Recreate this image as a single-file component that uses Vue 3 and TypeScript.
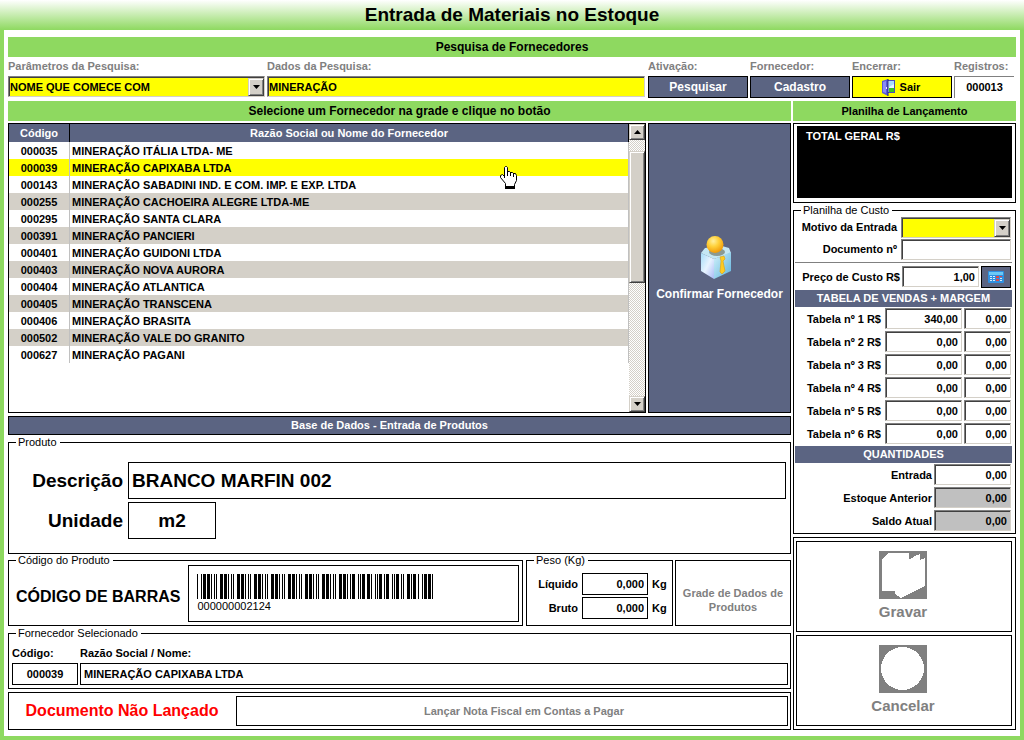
<script setup lang="ts">
import { computed, ref } from 'vue'

interface Supplier {
  code: string
  name: string
}

const suppliers: Supplier[] = [
  { code: '000035', name: 'MINERAÇÃO ITÁLIA LTDA- ME' },
  { code: '000039', name: 'MINERAÇÃO CAPIXABA LTDA' },
  { code: '000143', name: 'MINERAÇÃO SABADINI IND. E COM. IMP. E EXP. LTDA' },
  { code: '000255', name: 'MINERAÇÃO CACHOEIRA ALEGRE LTDA-ME' },
  { code: '000295', name: 'MINERAÇÃO SANTA CLARA' },
  { code: '000391', name: 'MINERAÇÃO PANCIERI' },
  { code: '000401', name: 'MINERAÇÃO GUIDONI LTDA' },
  { code: '000403', name: 'MINERAÇÃO NOVA AURORA' },
  { code: '000404', name: 'MINERAÇÃO ATLANTICA' },
  { code: '000405', name: 'MINERAÇÃO TRANSCENA' },
  { code: '000406', name: 'MINERAÇÃO BRASITA' },
  { code: '000502', name: 'MINERAÇÃO VALE DO GRANITO' },
  { code: '000627', name: 'MINERAÇÃO PAGANI' },
]

const selected = ref<Supplier>(suppliers[1])
const searchText = ref('MINERAÇÃO')
const count = computed(() => String(suppliers.length).padStart(6, '0'))

const prices = ref([
  { value: '340,00', margin: '0,00' },
  { value: '0,00', margin: '0,00' },
  { value: '0,00', margin: '0,00' },
  { value: '0,00', margin: '0,00' },
  { value: '0,00', margin: '0,00' },
  { value: '0,00', margin: '0,00' },
])

const quantities = [
  { id: 'entrada', label: 'Entrada', locked: false },
  { id: 'anterior', label: 'Estoque Anterior', locked: true },
  { id: 'saldo', label: 'Saldo Atual', locked: true },
]

// Code 39: nine elements per character, bars and spaces alternating.
const code39: Record<string, string> = {
  '0': 'nnnwwnwnn',
  '1': 'wnnwnnnnw',
  '2': 'nnwwnnnnw',
  '4': 'nnnwwnnnw',
  '*': 'nwnnwnwnn',
}
const barcode = '000000002124'
const bars = computed(() => {
  const out: { x: number; w: number }[] = []
  let x = 0
  for (const ch of `*${barcode}*`) {
    code39[ch].split('').forEach((e, i) => {
      const w = e === 'w' ? 3 : 1
      if (i % 2 === 0) out.push({ x, w })
      x += w
    })
    x += 2
  }
  return out
})
</script>

<template>
  <div class="window">
    <header class="title"><h1>Entrada de Materiais no Estoque</h1></header>
    <main class="body">
      <h2 class="green wide">Pesquisa de Fornecedores</h2>

      <form class="search" @submit.prevent>
        <div class="cell">
          <label for="param">Parâmetros da Pesquisa:</label>
          <div class="combo">
            <select id="param" class="sunken yellow"><option>NOME QUE COMECE COM</option></select>
            <span class="drop"><svg width="7" height="4" viewBox="0 0 7 4"><path d="M0 0H7L3.500 4Z" /></svg></span>
          </div>
        </div>
        <div class="cell data">
          <label for="dados">Dados da Pesquisa:</label>
          <input id="dados" v-model="searchText" class="sunken yellow" type="text" />
        </div>
        <div class="cell">
          <span class="caption">Ativação:</span>
          <button class="blue" type="submit">Pesquisar</button>
        </div>
        <div class="cell">
          <span class="caption">Fornecedor:</span>
          <button class="blue" type="button">Cadastro</button>
        </div>
        <div class="cell">
          <span class="caption">Encerrar:</span>
          <button class="exit" type="button">
            <svg width="14" height="17" viewBox="0 0 14 17">
              <rect x="5.500" y="1.500" width="7" height="12" fill="#e6f6ff" stroke="#4a4ab8" />
              <path d="M7 9H12V13H7Z" fill="#38c322" />
              <path d="M7 2H12V5L7 8Z" fill="#a8dcfa" />
              <path d="M0 2L6 0V17L0 14Z" fill="#5a5ad6" />
              <path d="M1 3L4 2V14L1 13Z" fill="#8c8cf4" />
              <path d="M6 0V17" stroke="#20207c" />
              <rect x="4" y="8" width="1" height="2" fill="#f3e9ff" />
            </svg>
            Sair
          </button>
        </div>
        <div class="cell">
          <label for="registros">Registros:</label>
          <output id="registros" class="records">{{ count }}</output>
        </div>
      </form>

      <div class="columns">
        <section class="left">
          <h2 class="green wide">Selecione um Fornecedor na grade e clique no botão</h2>
          <div class="pick">
            <div class="grid">
              <div class="rows">
                <table>
                  <thead>
                    <tr><th class="code">Código</th><th>Razão Social ou Nome do Fornecedor</th></tr>
                  </thead>
                  <tbody>
                    <tr
                      v-for="s in suppliers"
                      :key="s.code"
                      :class="{ current: s.code === selected.code }"
                      @click="selected = s"
                    >
                      <td class="code">{{ s.code }}</td>
                      <td>{{ s.name }}</td>
                    </tr>
                  </tbody>
                </table>
                <svg class="pointer" width="18" height="24" viewBox="0 0 18 24">
                  <path
                    d="M4.500 1.500L5.500 .5H6.500L7.500 1.500V5.500H9.500L10.500 6.500H12.500L13.500 7.500H15.500L16.500 9.500V14.500L14.500 18.500V20.500H5.500V17.500L.5 11.500V9.500L2.500 8.500L4.500 10.500Z"
                    fill="#fff" stroke="#000"
                  />
                  <path d="M7.500 5V10M10.500 6V10M13.500 7V11M4.500 10V12" stroke="#000" fill="none" />
                  <rect x="5" y="20" width="10" height="3" />
                </svg>
              </div>
              <div class="scroll">
                <button class="raised" type="button" aria-label="Subir"><svg width="7" height="4" viewBox="0 0 7 4"><path d="M0 4H7L3.500 0Z" /></svg></button>
                <div class="track"><div class="thumb"></div></div>
                <button class="raised" type="button" aria-label="Descer"><svg width="7" height="4" viewBox="0 0 7 4"><path d="M0 0H7L3.500 4Z" /></svg></button>
              </div>
            </div>
            <button class="blue confirm" type="button">
              <svg width="32" height="43" viewBox="0 0 32 43">
                <defs>
                  <radialGradient id="head" cx=".4" cy=".3" r=".7">
                    <stop offset="0" stop-color="#fff0a0" /><stop offset=".45" stop-color="#ffd23c" /><stop offset="1" stop-color="#f09a08" />
                  </radialGradient>
                  <linearGradient id="front" x1="0" y1="0" x2="1" y2="1">
                    <stop offset="0" stop-color="#a5ddf8" /><stop offset=".5" stop-color="#e8f4ff" /><stop offset="1" stop-color="#a9b8f5" />
                  </linearGradient>
                  <linearGradient id="side" x1="0" y1="0" x2="1" y2="1">
                    <stop offset="0" stop-color="#d3f2fa" /><stop offset="1" stop-color="#5eb2dd" />
                  </linearGradient>
                </defs>
                <path d="M1 17L5 12L22 10L29 12L31 17L14 23Z" fill="#c4e7f3" />
                <path d="M1 17L14 23V43L1 35Z" fill="url(#front)" />
                <path d="M14 23L31 16V35L14 43Z" fill="url(#side)" />
                <ellipse cx="17" cy="16" rx="8" ry="4" fill="#8b9a92" />
                <path d="M20 21L24 20L25 23L23 25L25 35L22 38L20 36L21 25Z" fill="#ffcb22" stroke="#d9a010" stroke-width=".6" />
                <circle cx="15" cy="8.500" r="8.500" fill="url(#head)" />
              </svg>
              Confirmar Fornecedor
            </button>
          </div>

          <h2 class="bar">Base de Dados - Entrada de Produtos</h2>

          <fieldset class="product">
            <legend>Produto</legend>
            <label for="desc">Descrição</label>
            <input id="desc" class="boxed" type="text" value="BRANCO MARFIN 002" />
            <label for="unid">Unidade</label>
            <input id="unid" class="boxed unit" type="text" value="m2" />
          </fieldset>

          <div class="trio">
            <fieldset class="codes">
              <legend>Código do Produto</legend>
              <div class="coderow">
                <strong>CÓDIGO DE BARRAS</strong>
                <div class="barcode">
                  <svg width="236" height="25" viewBox="0 0 236 25" shape-rendering="crispEdges">
                    <rect v-for="b in bars" :key="b.x" :x="b.x" y="0" :width="b.w" height="25" />
                  </svg>
                  <span>{{ barcode }}</span>
                </div>
              </div>
            </fieldset>
            <fieldset class="weight">
              <legend>Peso (Kg)</legend>
              <div class="weights">
                <label for="liq">Líquido</label><input id="liq" class="boxed" type="text" value="0,000" /><span>Kg</span>
                <label for="bru">Bruto</label><input id="bru" class="boxed" type="text" value="0,000" /><span>Kg</span>
              </div>
            </fieldset>
            <button class="plain datagrid" type="button" disabled>Grade de Dados de Produtos</button>
          </div>

          <fieldset class="chosen">
            <legend>Fornecedor Selecionado</legend>
            <div class="chosenrow">
              <div class="pair code"><label for="fcod">Código:</label><input id="fcod" class="boxed" type="text" :value="selected.code" readonly /></div>
              <div class="pair"><label for="fnome">Razão Social / Nome:</label><input id="fnome" class="boxed" type="text" :value="selected.name" readonly /></div>
            </div>
          </fieldset>

          <div class="status">
            <strong>Documento Não Lançado</strong>
            <button class="plain" type="button" disabled>Lançar Nota Fiscal em Contas a Pagar</button>
          </div>
        </section>

        <aside class="right">
          <h2 class="green">Planilha de Lançamento</h2>
          <div class="total"><div class="screen">TOTAL GERAL R$</div></div>

          <fieldset class="cost">
            <legend>Planilha de Custo</legend>
            <div class="sheet">
              <div class="line reason">
                <label for="motivo">Motivo da Entrada</label>
                <div class="combo">
                  <select id="motivo" class="sunken yellow"><option></option></select>
                  <span class="drop"><svg width="7" height="4" viewBox="0 0 7 4"><path d="M0 0H7L3.500 4Z" /></svg></span>
                </div>
              </div>
              <div class="line reason"><label for="doc">Documento nº</label><input id="doc" class="sunken" type="text" /></div>
              <hr />
              <div class="line price">
                <label for="custo">Preço de Custo R$</label>
                <input id="custo" class="sunken num" type="text" value="1,00" />
                <button class="blue calc" type="button" aria-label="Calculadora">
                  <svg width="16" height="12" viewBox="0 0 16 12">
                    <rect width="16" height="12" rx="1" fill="#2f8fe0" />
                    <rect x="1" y="1" width="14" height="3" fill="#6cc8f5" />
                    <path d="M2 5h2v1H2zM5 5h2v1H5zM2 7h2v1H2zM5 7h2v1H5zM2 9h2v1H2zM5 9h2v1H5zM12 7h2v1h-2zM12 9h2v1h-2z" fill="#d8ecfa" />
                    <path d="M8 5h3v2H8zM12 5h2v1h-2zM8 8h3v2H8z" fill="#e04848" />
                  </svg>
                </button>
              </div>
              <h3>TABELA DE VENDAS + MARGEM</h3>
              <div v-for="(p, i) in prices" :key="i" class="line">
                <label :for="'tab' + i">Tabela nº {{ i + 1 }} R$</label>
                <input :id="'tab' + i" v-model="p.value" class="sunken num tab" type="text" />
                <input v-model="p.margin" class="sunken num margin" type="text" :aria-label="'Margem ' + (i + 1)" />
              </div>
              <h3 class="second">QUANTIDADES</h3>
              <div v-for="q in quantities" :key="q.id" class="line qty">
                <label :for="q.id">{{ q.label }}</label>
                <input :id="q.id" class="sunken num" :class="{ locked: q.locked }" type="text" value="0,00" :readonly="q.locked" />
              </div>
            </div>
          </fieldset>

          <div class="actions">
            <button class="plain" type="button" disabled>
              <svg width="48" height="48" viewBox="0 0 48 48" shape-rendering="crispEdges">
                <rect width="48" height="48" fill="#808080" />
                <path d="M3 8L9 2H30V8L33 7L35 5L41 3V9L46 7V35L22 47L16 43V40H3Z" fill="#fff" />
              </svg>
              Gravar
            </button>
            <button class="plain" type="button" disabled>
              <svg width="48" height="48" viewBox="0 0 48 48" shape-rendering="crispEdges">
                <rect width="48" height="48" fill="#808080" />
                <circle cx="23.500" cy="23.500" r="21.500" fill="#fff" />
              </svg>
              Cancelar
            </button>
          </div>
        </aside>
      </div>
    </main>
  </div>
</template>

<style>
body {
  margin: 0;
  background: #8ed960;
}
</style>

<style scoped>
.window,
.window * {
  box-sizing: border-box;
}
.window {
  display: flex;
  flex-direction: column;
  min-height: 100vh;
  padding-bottom: 4px;
  background: #8ed960;
  color: #000;
  font: bold 11px/14px 'Liberation Sans', Arial, sans-serif;
}
button,
input,
select {
  font: inherit;
  color: inherit;
  margin: 0;
  border-radius: 0;
  min-width: 0;
}
h1, h2, h3 {
  margin: 0;
  font-size: 11px;
  text-align: center;
}
.title {
  padding: 3px 0;
  background: linear-gradient(#fff, #8ed960);
}
.title h1 {
  font-size: 19px;
  line-height: 24px;
}
.body {
  flex: 1;
  display: flex;
  flex-direction: column;
  margin: 0 4px;
  padding: 7px 4px 6px;
  background: #fff;
}
.green {
  background: #8ed960;
  line-height: 20px;
}
.wide {
  font-size: 12px;
}
.search {
  display: grid;
  grid-template-columns: 257px minmax(0, 1fr) 100px 100px 100px 62px;
  gap: 2px;
  margin-bottom: 3px;
}
.cell {
  display: flex;
  flex-direction: column;
}
.cell > label,
.caption {
  color: #808080;
  line-height: 19px;
}
.cell > button,
.records {
  height: 22px;
}
.data input {
  margin-right: 1px;
}
.sunken {
  height: 21px;
  padding: 0 3px 0 1px;
  background: #fff;
  border: 1px solid;
  border-color: #808080 #d4d0c8 #d4d0c8 #808080;
  box-shadow: inset 1px 1px #404040;
}
.yellow {
  background: #ff0;
}
.num {
  text-align: right;
}
.locked {
  background: #c0c0c0;
}
.combo {
  position: relative;
  display: flex;
}
.combo select {
  flex: 1;
  appearance: none;
}
.drop {
  position: absolute;
  top: 2px;
  right: 1px;
  bottom: 1px;
  width: 16px;
  display: grid;
  place-items: center;
  pointer-events: none;
}
.drop,
.raised,
.thumb {
  background: #d4d0c8;
  border: 1px solid;
  border-color: #d4d0c8 #404040 #404040 #d4d0c8;
  box-shadow: inset 1px 1px #fff, inset -1px -1px #808080;
}
.blue {
  padding: 0 4px;
  border: 1px solid #000;
  background: #5b6482;
  color: #fff;
  font-size: 12px;
}
.exit {
  display: flex;
  align-items: center;
  justify-content: center;
  gap: 4px;
  padding: 0 2px 0 0;
  border: 1px solid #000;
  background: #ff0;
}
.records {
  margin-right: 2px;
  border: solid #808080;
  border-width: 1px 0 0 1px;
  text-align: center;
  line-height: 21px;
}
.columns {
  flex: 1;
  display: grid;
  grid-template-columns: minmax(0, 1fr) 223px;
  gap: 2px;
}
.left,
.right {
  display: flex;
  flex-direction: column;
  min-width: 0;
}
.pick {
  flex: 1;
  display: grid;
  grid-template-columns: minmax(0, 1fr) 143px;
  gap: 2px;
  margin: 2px 0 3px;
}
.grid {
  display: flex;
  border: 1px solid #000;
}
.rows {
  position: relative;
  flex: 1;
}
table {
  width: 100%;
  border-collapse: separate;
  border-spacing: 0;
  table-layout: fixed;
}
th {
  height: 18px;
  padding: 0;
  background: #5b6482;
  color: #fff;
  border-right: 1px solid #000;
}
td {
  height: 17px;
  padding: 2px 2px 0;
  line-height: 15px;
  border-right: 1px solid #c0c0c0;
}
.code {
  width: 61px;
  text-align: center;
}
tbody tr:nth-child(even) {
  background: #d4d0c8;
}
tbody tr.current {
  background: #ff0;
}
.pointer {
  position: absolute;
  left: 491px;
  top: 42px;
}
.scroll {
  display: flex;
  flex-direction: column;
  width: 16px;
}
.raised {
  height: 16px;
  padding: 0;
  display: grid;
  place-items: center;
}
.track {
  flex: 1;
  padding-top: 11px;
  background: repeating-conic-gradient(#d4d0c8 0 25%, #fff 0 50%) 0 0 / 2px 2px;
}
.thumb {
  height: 132px;
}
.confirm {
  display: flex;
  flex-direction: column;
  align-items: center;
  justify-content: center;
  gap: 8px;
}
.confirm svg {
  margin-right: 8px;
}
.bar {
  padding-right: 20px;
  border: 1px solid #000;
  background: #5b6482;
  color: #fff;
  line-height: 17px;
  margin-bottom: 1px;
}
fieldset {
  min-width: 0;
  margin: 0;
  padding: 0;
  border: 1px solid #000;
}
legend {
  margin-left: 7px;
  padding: 0 3px 0 2px;
  font-weight: normal;
  line-height: 13px;
}
.boxed {
  border: 1px solid #000;
  background: #fff;
  padding: 0 3px;
}
.product {
  display: grid;
  grid-template-columns: 115px minmax(0, 1fr);
  gap: 3px 4px;
  padding: 13px 4px 14px 0;
  font-size: 19px;
  align-items: center;
}
.product legend {
  font-size: 11px;
}
.product label {
  padding-right: 1px;
  text-align: right;
}
.product .boxed {
  height: 37px;
}
.product .unit {
  width: 88px;
  text-align: center;
}
.trio {
  display: grid;
  grid-template-columns: minmax(0, 1fr) 147px 116px;
  column-gap: 2px;
  margin-bottom: 1px;
}
.codes {
  margin-right: 1px;
}
.coderow {
  display: flex;
  align-items: center;
  gap: 8px;
  margin: -2px 3px 3px 7px;
}
.coderow strong {
  padding-top: 6px;
  font-size: 16px;
}
.barcode {
  flex: 1;
  display: flex;
  flex-direction: column;
  padding: 8px;
  border: 1px solid #000;
  font-weight: normal;
  line-height: 14px;
}
.weights {
  display: grid;
  grid-template-columns: 51px 66px 1fr;
  gap: 2px 4px;
  align-items: center;
  padding: 6px 0 5px;
}
.weights label,
.weights .boxed {
  text-align: right;
}
.weights .boxed {
  height: 22px;
}
.plain {
  border: 1px solid #000;
  background: #fff;
  color: #808080;
  padding: 0 4px;
}
.datagrid {
  margin-top: 6px;
  padding-top: 14px;
}
.chosenrow {
  display: flex;
  gap: 2px;
  padding: 6px 2px 3px 3px;
}
.pair {
  flex: 1;
  display: flex;
  flex-direction: column;
  gap: 3px;
}
.pair.code {
  flex: none;
  width: 66px;
  text-align: left;
}
.pair .boxed {
  height: 22px;
}
.pair.code .boxed {
  text-align: center;
}
.status {
  display: grid;
  grid-template-columns: 224px minmax(0, 1fr);
  margin-top: 3px;
  padding: 3px 2px 3px 3px;
  border: 1px solid #000;
  align-items: center;
  text-align: center;
}
.status strong {
  padding-right: 4px;
  color: #f00;
  font-size: 16px;
}
.status button {
  height: 30px;
  padding-left: 28px;
}
.total {
  margin: 2px 0 1px;
  padding: 2px 3px 4px;
  border: 1px solid #000;
}
.screen {
  min-height: 72px;
  padding: 3px 9px;
  background: #000;
  color: #fff;
}
.sheet {
  display: flex;
  flex-direction: column;
  margin: -1px 3px 1px 1px;
}
.sheet h3 {
  background: #5b6482;
  color: #fff;
  line-height: 17px;
}
.sheet .second {
  margin-top: 1px;
}
.line {
  display: flex;
  justify-content: flex-end;
  align-items: center;
  gap: 2px;
  height: 23px;
  padding-right: 1px;
}
.line label {
  margin-right: 2px;
}
.reason {
  height: 22px;
}
.reason .combo,
.reason > input {
  width: 110px;
}
.sheet hr {
  width: 100%;
  margin: 2px 0 0;
  border: 0;
  border-top: 1px solid #808080;
}
.price {
  height: 27px;
}
.price label {
  margin-right: 0;
}
.price input,
.tab,
.qty input {
  width: 77px;
}
.margin {
  width: 47px;
}
.qty label {
  margin-right: 0;
}
.calc {
  width: 30px;
  height: 22px;
  display: grid;
  place-items: center;
}
.actions {
  flex: 1;
  display: grid;
  grid-template-rows: 1fr 1fr;
  gap: 3px;
  margin-top: 3px;
  padding: 3px 3px 3px 2px;
  border: 1px solid #000;
}
.actions button {
  display: flex;
  flex-direction: column;
  align-items: center;
  justify-content: center;
  gap: 6px;
  padding: 0 6px 4px 4px;
  font-size: 15px;
}
</style>
